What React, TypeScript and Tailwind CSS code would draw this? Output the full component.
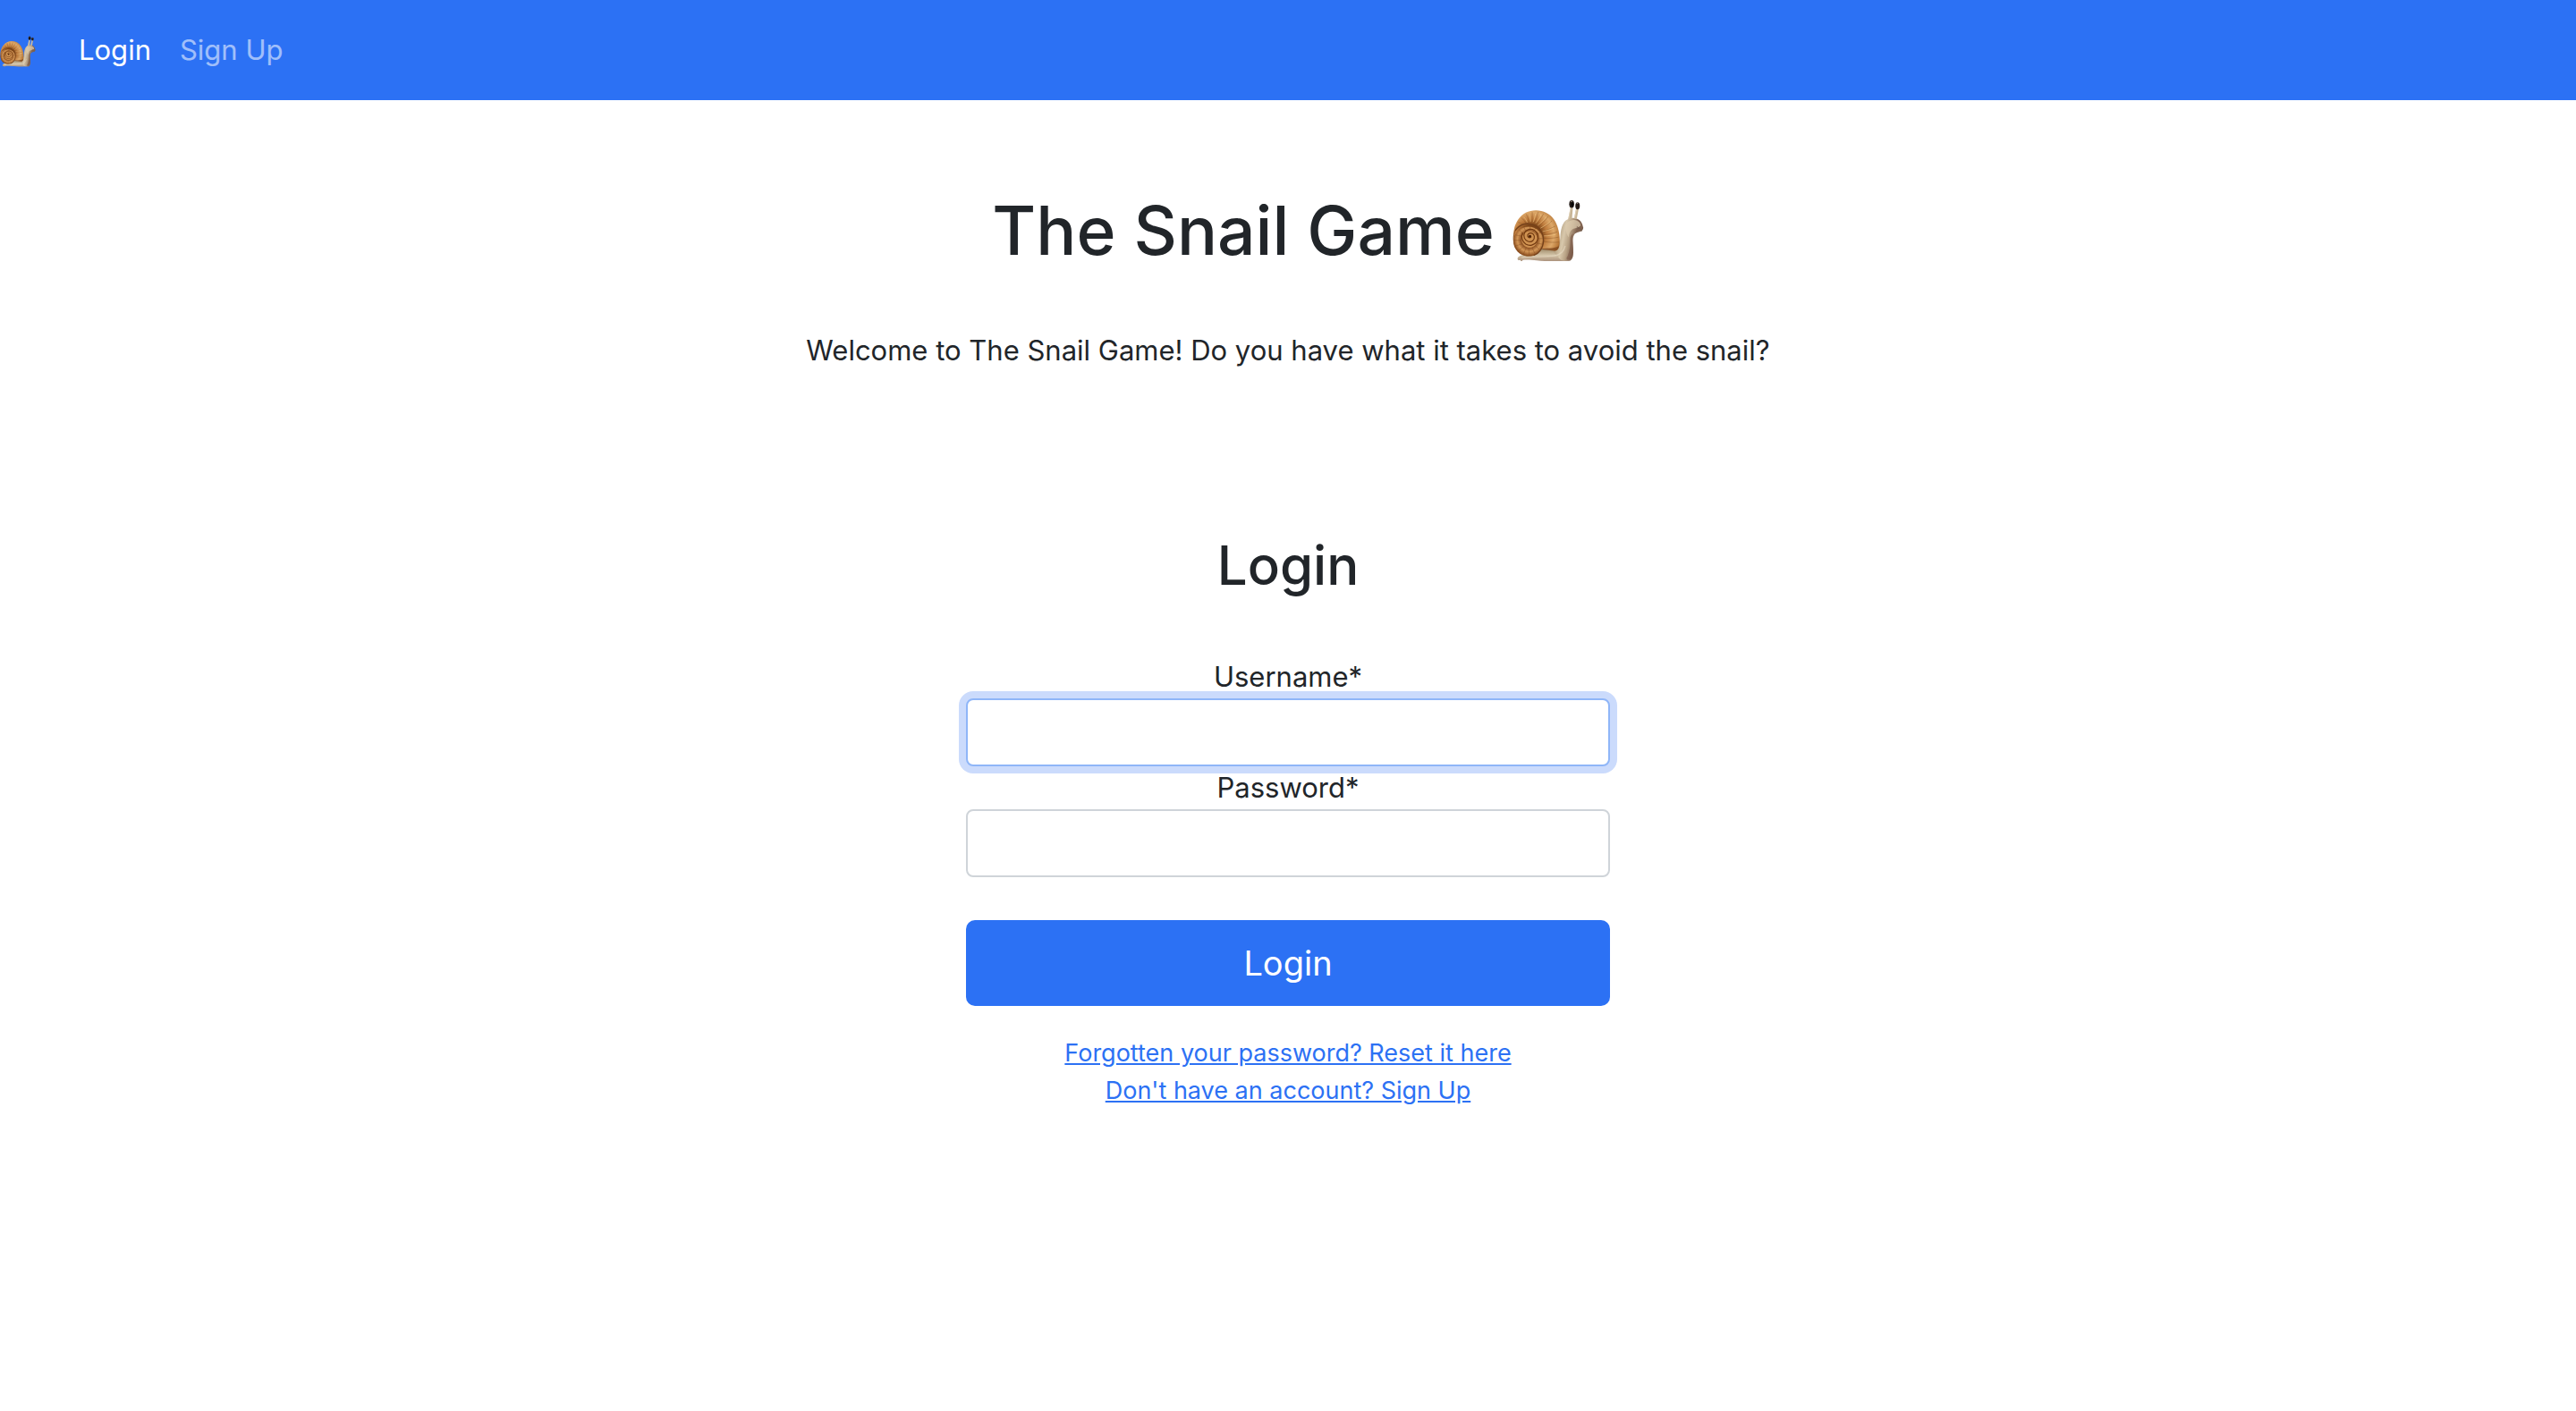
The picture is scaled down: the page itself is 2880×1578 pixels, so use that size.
import { useId } from "react";

function Snail({ className }: { className: string }) {
  const id = useId();
  const shell = `${id}shell`;
  const whorl = `${id}whorl`;
  const body = `${id}body`;
  const foot = `${id}foot`;
  return (
    <svg viewBox="45 41 243 213" className={className} role="img" aria-label="snail">
      <defs>
        <radialGradient id={shell} gradientUnits="userSpaceOnUse" cx="110" cy="160" r="105">
          <stop offset="0.3" stopColor="#7c4417" />
          <stop offset="0.5" stopColor="#c07d3e" />
          <stop offset="0.72" stopColor="#dca768" />
          <stop offset="0.92" stopColor="#b87838" />
          <stop offset="1" stopColor="#7a461b" />
        </radialGradient>
        <radialGradient id={whorl} gradientUnits="userSpaceOnUse" cx="102" cy="178" r="56">
          <stop offset="0" stopColor="#c98a4c" />
          <stop offset="0.38" stopColor="#d0965a" />
          <stop offset="0.5" stopColor="#935626" />
          <stop offset="0.72" stopColor="#d39757" />
          <stop offset="1" stopColor="#86481a" />
        </radialGradient>
        <linearGradient id={body} gradientUnits="userSpaceOnUse" x1="196" y1="170" x2="256" y2="182">
          <stop offset="0" stopColor="#b39f80" />
          <stop offset="0.35" stopColor="#d8c8ac" />
          <stop offset="0.65" stopColor="#b9a386" />
          <stop offset="1" stopColor="#806350" />
        </linearGradient>
        <linearGradient id={foot} gradientUnits="userSpaceOnUse" x1="0" y1="205" x2="0" y2="252">
          <stop offset="0" stopColor="#96815f" />
          <stop offset="0.55" stopColor="#d4c5a9" />
          <stop offset="1" stopColor="#a98f7a" />
        </linearGradient>
      </defs>
      <path
        d="M62 243c0-6 6-11 15-13 26-7 45-32 72-34l98 22c3 14 1 25-8 30-24 4-80 4-112 0-18-2-36-3-47-1-2 5-8 5-8 0-5 2-9 0-10-4z"
        fill={`url(#${foot})`}
      />
      <path
        d="M180 213c18-8 25-22 27-40 1-25 5-49 20-61 8-6 14-8 23-8 16-1 31 10 34 28 3 7 0 12-4 16-8 4-19 4-25 12-8 13-5 27-4 44 1 21 2 38-10 45-13 2-28 0-32-3-12-9-20-22-29-33z"
        fill={`url(#${body})`}
      />
      <path d="M234 108l8-40 8 1-3 37zM254 106l7-35 9 1-7 36z" fill="#c8b596" />
      <path d="M236 105l7-35M256 104l7-32" stroke="#e9dcc4" strokeWidth="2" fill="none" />
      <path d="M228 122c10-10 24-14 36-9 9 4 13 11 12 18-7 7-20 7-28 12-8 6-11 15-12 27-10-14-14-33-8-48z" fill="#dccbae" opacity="0.75" />
      <ellipse cx="246" cy="57" rx="8.5" ry="13" fill="#231a16" />
      <ellipse cx="266" cy="63" rx="7.5" ry="12" fill="#231a16" />
      <ellipse cx="248" cy="58" rx="3.5" ry="8" fill="#000" />
      <ellipse cx="245" cy="48" rx="3" ry="2" fill="#9a8c82" />
      <ellipse cx="265" cy="54" rx="2.5" ry="2" fill="#9a8c82" />
      <path d="M264 132c2 5 5 8 11 8l4 9c1-6 4-9 5-13M269 137l-2 5" stroke="#70584a" strokeWidth="2" fill="none" />
      <path d="M232 234c8-18 10-40 9-62 2-9 6-13 10-15-4 18 2 45-2 72-2 8-7 16-17 17-5-2-4-7 0-12z" fill="#795746" opacity="0.6" />
      <path
        d="M48 169c-2-32 14-68 42-83 32-16 76-8 97 25 17 27 21 63 17 88-2 12-7 17-18 16l-45-7-23 21-55-18z"
        fill={`url(#${shell})`}
      />
      <path d="M148 208c21-2 38 1 54-8-3 11-7 17-16 16l-42-5z" fill="#7a431b" opacity="0.75" />
      <g fill="none" stroke="#7d4a1c" strokeWidth="1.8" opacity="0.65">
        <path d="M58 138c5-4 8-5 14-4M64 119c8 1 12 4 17 9M75 103c7 6 12 12 16 20M92 91c4 10 8 19 9 29M112 84c0 12 1 24-1 36M132 84c-3 13-7 25-14 38M150 90c-6 13-15 25-26 36M166 99c-10 14-22 25-34 34M179 114c-12 11-27 22-40 29M190 132c-14 8-29 14-44 18M197 151c-15 6-31 9-47 10M202 169c-16 4-34 5-51 4M204 186c-18 2-36 1-54-2" />
      </g>
      <g fill="none" stroke="#f4cd8c" strokeWidth="3" opacity="0.55">
        <path d="M83 101c7 6 9 12 12 18M102 91c3 9 4 18 4 26M123 90c-2 11-4 20-8 28M142 92c-4 11-11 21-18 30M159 101c-8 11-18 20-28 28M174 117c-10 8-22 15-34 22M185 138c-12 6-25 9-38 12M192 160c-13 3-26 5-40 5" />
      </g>
      <ellipse cx="99" cy="184" rx="51" ry="50" fill={`url(#${whorl})`} />
      <path d="M54 147c13-18 33-26 53-22 28 5 44 28 43 57-1 25-15 43-33 49" fill="none" stroke="#74401a" strokeWidth="4" />
      <path d="M54 147c-8 19-8 42 5 61 14 20 37 31 60 22" fill="none" stroke="#8f5524" strokeWidth="3" />
      <g fill="none" stroke="#7d4519" strokeWidth="1.8" opacity="0.65">
        <path d="M55 162l22 4M51 180l26 0M55 199l24-7M65 216l19-17M82 228l9-22M102 232l-2-25M121 225l-10-21M136 211l-16-15M145 193l-22-4M148 174l-24 0M140 153l-20 12M125 137l-13 17M106 130l-4 20M83 133l8 18M67 144l15 14" />
      </g>
      <path d="M77 174c1-14 12-25 26-25 17 1 28 15 26 31-2 17-16 27-30 24-14-3-23-14-22-30z" fill="#cf9251" />
      <path
        d="M104 164c4 0 6 6 1 7-8 1-12-8-6-13 7-6 18-2 20 8 2 13-9 22-21 18-12-4-18-18-12-30 6-11 21-15 33-8 13 8 17 25 8 39-8 12-24 16-37 8-12-8-17-25-11-38"
        fill="none"
        stroke="#70380f"
        strokeWidth="3.5"
        strokeLinecap="round"
      />
      <circle cx="104" cy="166" r="4.5" fill="#4d2208" />
      <path d="M76 239c35-6 78-1 110-6 21-3 33-13 38-34" fill="none" stroke="#efe4ce" strokeWidth="4" opacity="0.5" />
    </svg>
  );
}

const inputBase =
  "block h-19 w-full rounded-lg border-2 bg-white px-6 text-[31px] text-[#212529] outline-none";

export default function App() {
  return (
    <div className="min-h-screen bg-white font-['Inter',sans-serif] text-[31px] leading-12 text-[#212529]">
      <nav className="flex h-28 items-center bg-[#2c71f4]">
        <a href="#home" aria-label="Home" className="mr-8 block w-10 pt-1">
          <Snail className="block w-10" />
        </a>
        <a href="#login" className="px-4 text-white">Login</a>
        <a href="#signup" className="px-4 text-white/55">Sign Up</a>
      </nav>
      <main className="flex flex-col items-center pt-24 text-center">
        <h1 className="flex items-center justify-center gap-5 text-[75px] leading-[100px] font-medium">
          The Snail Game
          <Snail className="block w-20" />
        </h1>
        <p className="mt-15">Welcome to The Snail Game! Do you have what it takes to avoid the snail?</p>
        <section className="mt-44 w-1/4">
          <h2 className="text-[60px] leading-20 font-medium">Login</h2>
          <form className="mt-[61px]" onSubmit={(e) => e.preventDefault()}>
            <label htmlFor="username" className="block">Username*</label>
            <input
              id="username"
              name="username"
              type="text"
              required
              className={`${inputBase} border-[#8fb6f8] ring-8 ring-[#cbdbfc]`}
            />
            <label htmlFor="password" className="block">Password*</label>
            <input
              id="password"
              name="password"
              type="password"
              required
              className={`${inputBase} border-[#cfd4d9]`}
            />
            <button type="submit" className="mt-12 block h-24 w-full rounded-[10px] bg-[#2c71f4] text-[38px] text-white">
              Login
            </button>
          </form>
          <div className="mt-8 flex flex-col items-center text-[27px] leading-[42px] text-[#2c71f4]">
            <a href="#reset" className="underline">Forgotten your password? Reset it here</a>
            <a href="#signup" className="underline">Don't have an account? Sign Up</a>
          </div>
        </section>
      </main>
    </div>
  );
}
